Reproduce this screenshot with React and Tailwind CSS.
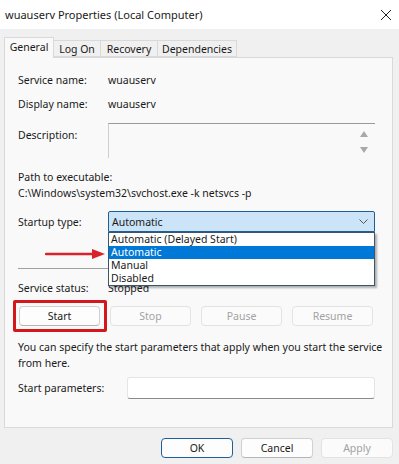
import React from "react";

const font = { fontFamily: '"Noto Sans", "Open Sans", sans-serif' };

function Btn({ children, disabled, className = "" }) {
  return (
    <div
      className={
        "flex h-[20px] w-[81px] items-center justify-center rounded-[4px] border " +
        (disabled
          ? "border-[#e3e3e3] bg-[#fbfbfb] text-[#a2a2a2] "
          : "border-[#d0d0d0] border-b-[#b5b5b5] bg-[#fdfdfd] text-[#1a1a1a] ") +
        className
      }
    >
      {children}
    </div>
  );
}

export default function App() {
  return (
    <div
      className="relative h-[464px] w-[399px] overflow-hidden bg-[#f0f0f0] text-[10.5px] leading-[16px] text-[#1a1a1a]"
      style={font}
    >
      {/* Title bar */}
      <div className="flex h-[29px] items-center justify-between bg-white pl-[5px] pr-[7px]">
        <span className="text-[11px] text-[#1a1a1a]">wuauserv Properties (Local Computer)</span>
        <svg width="12" height="12" viewBox="0 0 12 12" className="mr-[0px]">
          <path d="M1 1 L11 11 M11 1 L1 11" stroke="#222" strokeWidth="1" fill="none" />
        </svg>
      </div>

      {/* Tabs */}
      <div className="mt-[8px] flex h-[20px] items-end pl-[4px]">
        <div className="relative z-10 -mb-px flex h-[21px] w-[50px] items-start justify-center border border-b-0 border-[#d9d9d9] bg-[#f9f9f9] pt-[1px]">
          General
        </div>
        <div className="flex h-[17px] w-[47px] items-center justify-center border border-l-0 border-[#d9d9d9] bg-[#f0f0f0]">
          Log On
        </div>
        <div className="flex h-[17px] w-[57px] items-center justify-center border border-l-0 border-[#d9d9d9] bg-[#f0f0f0]">
          Recovery
        </div>
        <div className="flex h-[17px] w-[79px] items-center justify-center border border-l-0 border-[#d9d9d9] bg-[#f0f0f0]">
          Dependencies
        </div>
      </div>

      {/* Panel */}
      <div className="relative ml-[4px] flex h-[371px] w-[389px] flex-col border border-[#d9d9d9] bg-[#f9f9f9] pl-[13px]">
        <div className="mt-[14px] flex h-[16px] items-center">
          <span className="w-[90px]">Service name:</span>
          <span>wuauserv</span>
        </div>
        <div className="mt-[8px] flex h-[16px] items-center">
          <span className="w-[90px]">Display name:</span>
          <span>wuauserv</span>
        </div>
        <div className="mt-[11px] flex h-[35px] items-start">
          <span className="w-[90px] pt-[4px]">Description:</span>
          <div className="relative h-[35px] w-[267px] border-l border-t border-l-[#cfcfcf] border-t-[#9a9a9a] bg-[#f9f9f9]">
            <svg width="8" height="6" viewBox="0 0 8 6" className="absolute right-[7px] top-[7px]">
              <path d="M0 6 L4 0 L8 6 Z" fill="#a8a8a8" />
            </svg>
            <svg width="8" height="6" viewBox="0 0 8 6" className="absolute right-[7px] top-[23px]">
              <path d="M0 0 L8 0 L4 6 Z" fill="#a8a8a8" />
            </svg>
          </div>
        </div>
        <div className="mt-[11px] flex h-[16px] items-center">Path to executable:</div>
        <div className="flex h-[16px] items-center">C:\Windows\system32\svchost.exe -k netsvcs -p</div>
        <div className="mt-[10px] flex h-[21px] items-center">
          <span className="w-[90px]">Startup type:</span>
          <div className="relative flex h-[21px] w-[267px] items-center justify-between rounded-t-[2px] border border-[#1f5f95] bg-[#cce4f7] pl-[3px] pr-[6px]">
            <span>Automatic</span>
            <svg width="9" height="5" viewBox="0 0 9 5">
              <path d="M0.5 0.5 L4.5 4.5 L8.5 0.5" stroke="#555" strokeWidth="1" fill="none" />
            </svg>
            {/* Dropdown list */}
            <div className="absolute left-[-1px] top-[20px] z-20 flex w-[267px] flex-col border border-[#3b5570] bg-white leading-[13px] shadow-[2px_2px_2px_rgba(0,0,0,0.3)]">
              <div className="h-[13px] pl-[2px]">Automatic (Delayed Start)</div>
              <div className="h-[13px] bg-[#0078d7] pl-[2px] text-white">Automatic</div>
              <div className="h-[13px] pl-[2px]">Manual</div>
              <div className="h-[13px] pl-[2px]">Disabled</div>
            </div>
          </div>
        </div>
        <div className="mt-[36px] h-px w-[357px] bg-[#a0a0a0]" />
        <div className="mt-[11px] flex h-[16px] items-center">
          <span className="w-[90px]">Service status:</span>
          <span>Stopped</span>
        </div>
        <div className="mt-[10px] flex h-[20px] items-center gap-[10px] pl-[1px]">
          <div className="relative">
            <Btn>Start</Btn>
            <div className="pointer-events-none absolute bottom-[-6px] left-[-6px] right-[-7px] top-[-6px] rounded-[2px] border-[3px] border-[#d4161d]" />
          </div>
          <Btn disabled>Stop</Btn>
          <Btn disabled>Pause</Btn>
          <Btn disabled>Resume</Btn>
        </div>
        <div className="mt-[13px] leading-[16px]">
          You can specify the start parameters that apply when you start the service
          <br />
          from here.
        </div>
        <div className="mt-[6px] flex h-[22px] items-center">
          <span className="w-[109px]">Start parameters:</span>
          <div className="h-[22px] w-[248px] rounded-[3px] border border-[#e5e5e5] border-b-[#8a8a8a] bg-white" />
        </div>

        {/* Red arrow annotation */}
        <svg
          width="62"
          height="12"
          viewBox="0 0 62 12"
          className="absolute left-[40px] top-[190px] z-30"
        >
          <path d="M1 6 L50 6" stroke="#d9232a" strokeWidth="2.4" strokeLinecap="round" />
          <path d="M47 1 L60 6 L47 11 Z" fill="#d9232a" />
        </svg>
      </div>

      {/* Bottom buttons */}
      <div className="mt-[10px] flex justify-end gap-[8px] pr-[6px]">
        <div className="flex h-[20px] w-[72px] items-center justify-center rounded-[4px] border border-[#1f5f9a] bg-[#fdfdfd]">
          OK
        </div>
        <div className="flex h-[20px] w-[72px] items-center justify-center rounded-[4px] border border-[#d0d0d0] border-b-[#b5b5b5] bg-[#fdfdfd]">
          Cancel
        </div>
        <div className="flex h-[20px] w-[72px] items-center justify-center rounded-[4px] border border-[#e3e3e3] bg-[#fbfbfb] text-[#a2a2a2]">
          Apply
        </div>
      </div>
    </div>
  );
}
